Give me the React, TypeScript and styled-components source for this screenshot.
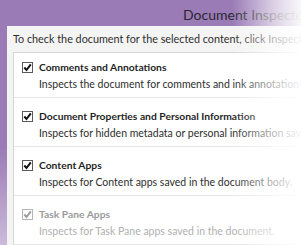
import React, { FC } from 'react';
import styled, { createGlobalStyle } from 'styled-components';

const GlobalStyle = createGlobalStyle`
  html, body {
    margin: 0;
    padding: 0;
    background: #ffffff;
  }
  body {
    width: 301px;
    height: 245px;
    overflow: hidden;
    font-family: Lato, "Open Sans", sans-serif;
  }
`;

const Frame = styled.div`
  position: relative;
  width: 301px;
  height: 245px;
  overflow: hidden;
  display: flex;
  flex-direction: column;
  background: linear-gradient(to bottom, #9a7bb6 0%, #9a7bb6 60%, #cbbbd9 100%);
`;

const TitleBar = styled.div`
  height: 26px;
  flex: none;
  padding-left: 183px;
  box-sizing: border-box;
  font-size: 14px;
  line-height: 30px;
  color: #2c2731;
  white-space: nowrap;
`;

const Body = styled.div`
  flex: 1;
  margin-left: 7px;
  background: #f4f4f4;
  display: flex;
  flex-direction: column;
  padding-left: 6px;
`;

const Intro = styled.div`
  height: 26px;
  flex: none;
  font-size: 10.8px;
  line-height: 26px;
  color: #2e2e2e;
  white-space: nowrap;
`;

const Panel = styled.div`
  flex: 1;
  background: #ffffff;
  border-top: 1px solid #d6d6d6;
  border-left: 1px solid #d6d6d6;
`;

const Item = styled.div`
  display: grid;
  grid-template-columns: 11px 1fr;
  column-gap: 6px;
  padding: 9px 0 6px 8px;
  border-bottom: 1px solid #e6e6e6;
  height: 49px;
  box-sizing: border-box;
  white-space: nowrap;

  &:first-child {
    height: 45px;
    padding-top: 5px;
  }
`;

const Box = styled.div<{ disabled?: boolean }>`
  width: 11px;
  height: 11px;
  box-sizing: border-box;
  margin-top: 4px;
  border: 1px solid ${p => (p.disabled ? '#b4b4b4' : '#5a5a5a')};
  background: #ffffff;
  display: flex;
  align-items: center;
  justify-content: center;

  svg {
    display: block;
  }
`;

const Title = styled.div<{ disabled?: boolean }>`
  font-size: 10.3px;
  font-weight: 700;
  line-height: 18px;
  color: ${p => (p.disabled ? '#9a9a9a' : '#1f1f1f')};
`;

const Desc = styled.div<{ disabled?: boolean }>`
  grid-column: 2;
  font-size: 10.5px;
  line-height: 17px;
  color: ${p => (p.disabled ? '#b0b0b0' : '#2e2e2e')};
`;

const Fade = styled.div`
  position: absolute;
  inset: 0;
  pointer-events: none;
  background: linear-gradient(
    to right,
    rgba(255, 255, 255, 0) 77%,
    rgba(255, 255, 255, 0.65) 91%,
    rgba(255, 255, 255, 0.95) 100%
  );
`;

const Check: FC<{ disabled?: boolean }> = ({ disabled }) => (
  <svg width="9" height="9" viewBox="0 0 9 9">
    <path
      d="M1.3 4.5 L3.5 7 L7.8 1.4"
      fill="none"
      stroke={disabled ? '#9c9c9c' : '#111111'}
      strokeWidth="2"
    />
  </svg>
);

const items = [
  {
    title: 'Comments and Annotations',
    desc: 'Inspects the document for comments and ink annotations.',
  },
  {
    title: 'Document Properties and Personal Information',
    desc: 'Inspects for hidden metadata or personal information saved with the document.',
  },
  {
    title: 'Content Apps',
    desc: 'Inspects for Content apps saved in the document body.',
  },
  {
    title: 'Task Pane Apps',
    desc: 'Inspects for Task Pane apps saved in the document.',
    disabled: true,
  },
];

const App: FC = () => (
  <>
    <GlobalStyle />
    <Frame>
      <TitleBar>Document Inspector</TitleBar>
      <Body>
        <Intro>To check the document for the selected content, click Inspect.</Intro>
        <Panel>
          {items.map((item, index) => (
            <Item key={`item-${index}`}>
              <Box disabled={item.disabled}>
                <Check disabled={item.disabled} />
              </Box>
              <Title disabled={item.disabled}>{item.title}</Title>
              <Desc disabled={item.disabled}>{item.desc}</Desc>
            </Item>
          ))}
        </Panel>
      </Body>
      <Fade />
    </Frame>
  </>
);

export default App;
